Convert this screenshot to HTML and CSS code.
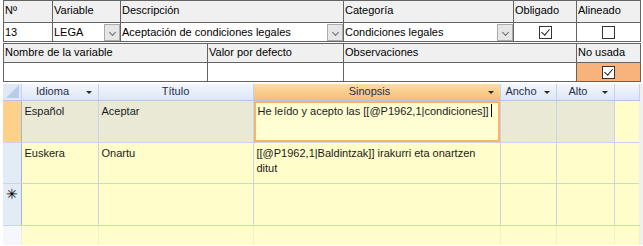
FILE: index.html
```html
<!DOCTYPE html>
<html lang="es">
<head>
    <meta charset="UTF-8">
    <title>Variable</title>
    <link rel="stylesheet" href="styles.css">
</head>
<body>
    <table class="form-table">
        <colgroup>
            <col style="width:49px"><col style="width:68px"><col style="width:223px">
            <col style="width:170px"><col style="width:63px"><col style="width:64px">
        </colgroup>
        <tr class="label-row">
            <td>Nº</td>
            <td>Variable</td>
            <td>Descripción</td>
            <td>Categoría</td>
            <td>Obligado</td>
            <td>Alineado</td>
        </tr>
        <tr class="value-row">
            <td>13</td>
            <td><div class="combo"><span>LEGA</span><span class="combo-btn"></span></div></td>
            <td><div class="combo"><span>Aceptación de condiciones legales</span><span class="combo-btn"></span></div></td>
            <td><div class="combo"><span>Condiciones legales</span><span class="combo-btn"></span></div></td>
            <td class="center"><span class="check checked"></span></td>
            <td class="center"><span class="check"></span></td>
        </tr>
    </table>

    <table class="form-table second">
        <colgroup>
            <col style="width:204px"><col style="width:136px"><col style="width:233px"><col style="width:64px">
        </colgroup>
        <tr class="label-row">
            <td>Nombre de la variable</td>
            <td>Valor por defecto</td>
            <td>Observaciones</td>
            <td>No usada</td>
        </tr>
        <tr class="value-row">
            <td></td>
            <td></td>
            <td></td>
            <td class="center unused"><span class="check checked"></span></td>
        </tr>
    </table>

    <div class="grid-wrap">
        <table class="grid">
            <colgroup>
                <col style="width:18px"><col style="width:77px"><col style="width:155px">
                <col style="width:247px"><col style="width:56px"><col style="width:58px"><col style="width:25px">
            </colgroup>
            <tr class="grid-head">
                <th class="corner"><span class="corner-tri"></span></th>
                <th class="has-sort"><span class="head-text">Idioma</span><span class="sort"></span></th>
                <th><span class="head-text">Título</span></th>
                <th class="active-head has-sort"><span class="head-text">Sinopsis</span><span class="sort"></span></th>
                <th class="has-sort"><span class="head-text">Ancho</span><span class="sort"></span></th>
                <th class="has-sort"><span class="head-text">Alto</span><span class="sort"></span></th>
                <th></th>
            </tr>
            <tr class="grid-row current tall">
                <td class="selector"></td>
                <td>Español</td>
                <td>Aceptar</td>
                <td class="editing">He leído y acepto las [[@P1962,1|condiciones]]<span class="caret"></span></td>
                <td></td>
                <td></td>
                <td class="filler"></td>
            </tr>
            <tr class="grid-row">
                <td class="selector"></td>
                <td>Euskera</td>
                <td>Onartu</td>
                <td>[[@P1962,1|Baldintzak]] irakurri eta onartzen ditut</td>
                <td></td>
                <td></td>
                <td class="filler"></td>
            </tr>
            <tr class="grid-row tall">
                <td class="selector new">✳</td>
                <td></td>
                <td></td>
                <td></td>
                <td></td>
                <td></td>
                <td class="filler"></td>
            </tr>
            <tr class="grid-empty">
                <td class="selector"></td>
                <td></td><td></td><td></td><td></td><td></td><td></td>
            </tr>
        </table>
    </div>
</body>
</html>
```

FILE: styles.css
```css
body {
    margin: 0;
    padding: 0 3px;
    background-color: #ffffff;
    font-family: "Liberation Sans", Arial, sans-serif;
    font-size: 11px;
    color: #000000;
    height: 246px;
    overflow: hidden;
}

.form-table {
    border-collapse: collapse;
    table-layout: fixed;
    width: 637px;
}

.form-table td {
    border: 1px solid #646464;
    padding: 0 1px;
    white-space: nowrap;
    overflow: hidden;
}

.form-table.second {
    margin-top: 1px;
}

.label-row td {
    background-color: #f0f0f0;
    height: 22px;
    vertical-align: top;
    padding-top: 3px;
    box-sizing: border-box;
}

.value-row td {
    background-color: #ffffff;
    height: 19px;
    box-sizing: border-box;
}

.second .label-row td {
    height: 19px;
    padding-top: 2px;
}

.center {
    text-align: center;
}

.unused {
    background-color: #f8b37c !important;
}

.combo {
    display: flex;
    align-items: center;
    justify-content: space-between;
    height: 18px;
    margin-right: -1px;
}

.combo-btn {
    width: 16px;
    height: 17px;
    background-color: #e6e6e6;
    border: 1px solid #acacac;
    box-sizing: border-box;
    position: relative;
}

.combo-btn::after {
    content: "";
    position: absolute;
    left: 5px;
    top: 5px;
    width: 4px;
    height: 4px;
    border-right: 1px solid #6d6d6d;
    border-bottom: 1px solid #6d6d6d;
    transform: rotate(45deg);
}

.check {
    display: inline-block;
    width: 13px;
    height: 13px;
    border: 1px solid #333333;
    background-color: #ffffff;
    box-sizing: border-box;
    vertical-align: middle;
    position: relative;
}

.check.checked::after {
    content: "";
    position: absolute;
    left: 3px;
    top: 0px;
    width: 4px;
    height: 7px;
    border-right: 1px solid #222222;
    border-bottom: 1px solid #222222;
    transform: rotate(40deg);
}

.grid-wrap {
    margin-top: 2px;
    margin-right: -3px;
    background-color: #f0f0f0;
}

.grid {
    border-collapse: collapse;
    table-layout: fixed;
    width: 636px;
}

.grid th {
    height: 16px;
    padding: 0;
    font-weight: normal;
    color: #1e2f50;
    background: linear-gradient(#f3f7fc, #dce6f4);
    border-right: 1px solid #c5d3e7;
    border-bottom: 1px solid #b4c6e2;
    position: relative;
    text-align: center;
    box-sizing: border-box;
}

.grid th.has-sort {
    padding-right: 14px;
}

.grid th.active-head {
    background: linear-gradient(#fbdda6, #f6bd72);
}

.head-text {
    line-height: 15px;
}

.sort {
    position: absolute;
    right: 6px;
    top: 7px;
    width: 0;
    height: 0;
    border-left: 3px solid transparent;
    border-right: 3px solid transparent;
    border-top: 3px solid #2a2a2a;
}

.corner {
    background: #dfe8f5 !important;
}

.corner-tri {
    position: absolute;
    right: 2px;
    bottom: 2px;
    width: 0;
    height: 0;
    border-left: 13px solid transparent;
    border-bottom: 13px solid #b9cbe6;
}

.grid td {
    background-color: #fffdc9;
    border-right: 1px solid #c8d4e9;
    border-bottom: 1px solid #c8d4e9;
    vertical-align: top;
    padding: 3px 3px 0 3px;
    height: 41px;
    box-sizing: border-box;
    color: #1b1b1b;
    line-height: 15px;
    font-size: 11px;
}

.grid .tall td {
    height: 42px;
}

.grid td.selector {
    background-color: #e3ebf7;
    border-right: 1px solid #9fb4d6;
    padding: 0;
}

.grid .current td {
    background-color: #e9e9d6;
}

.grid .current td.selector {
    background-color: #fcd18a;
}

.grid .current td.filler,
.grid td.filler {
    background-color: #fffdc9;
    border-right: none;
}

.grid td.editing {
    background-color: #fffdd2;
    box-shadow: inset 0 0 0 2px #f7b46a;
    padding-left: 4px;
}

.caret {
    display: inline-block;
    width: 1px;
    height: 13px;
    margin-left: 2px;
    background-color: #000000;
    vertical-align: -2px;
}

.grid td.new {
    text-align: center;
    font-size: 14px;
    padding-top: 3px;
    color: #000000;
}

.grid-empty td {
    height: 20px !important;
    background-color: #fffdcb !important;
    border-right: 1px solid #f3f1cc !important;
    border-bottom: none !important;
}

.grid-empty td.selector {
    background-color: #f6f6fd !important;
}
```
